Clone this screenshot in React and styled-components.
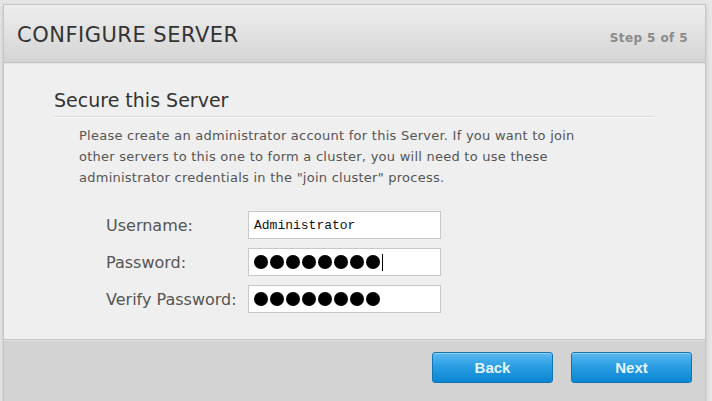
import React from "react";
import styled, { createGlobalStyle } from "styled-components";

const Global = createGlobalStyle`
  html, body { margin: 0; padding: 0; }
  body {
    background: #e6e6e6;
    font-family: "DejaVu Sans", Verdana, sans-serif;
    width: 712px;
    height: 401px;
    overflow: hidden;
  }
`;

const Panel = styled.div`
  margin: 4px 6px 0 3px;
  width: 701px;
  border: 1px solid #c6c6c6;
  box-shadow: 0 2px 4px rgba(0, 0, 0, 0.18);
  background: #efefef;
  display: flex;
  flex-direction: column;
`;

const Header = styled.div`
  height: 57px;
  display: flex;
  align-items: center;
  justify-content: space-between;
  padding: 0 17px 0 13px;
  background: linear-gradient(#eeeeee, #d4d4d4);
  border-bottom: 1px solid #c2c2c2;
  box-shadow: 0 1px 0 #e4e4e4;
`;

const Title = styled.h1`
  margin: 0;
  font-size: 21px;
  letter-spacing: 0.5px;
  font-weight: normal;
  color: #333;
  padding-top: 2px;
`;

const Step = styled.div`
  font-size: 12px;
  letter-spacing: 0.4px;
  font-weight: bold;
  color: #8a8a8a;
  padding-top: 8px;
`;

const Body = styled.div`
  padding: 26px 52px 0 50px;
  height: 250px;
`;

const SectionTitle = styled.h2`
  margin: 0;
  font-size: 19px;
  font-weight: normal;
  color: #333;
  padding: 0 0 5px 0;
  border-bottom: 1px solid #dcdcdc;
  box-shadow: 0 1px 0 #f8f8f8;
`;

const Intro = styled.p`
  margin: 8px 0 0 25px;
  font-size: 13px;
  letter-spacing: 0.25px;
  line-height: 21px;
  color: #555;
  white-space: nowrap;
`;

const Form = styled.div`
  margin: 23px 0 0 52px;
  display: grid;
  grid-template-columns: 142px 193px;
  row-gap: 9px;
  align-items: center;
`;

const Label = styled.label`
  font-size: 16px;
  color: #555;
`;

const Field = styled.div`
  box-sizing: border-box;
  height: 28px;
  background: #fff;
  border: 1px solid #c8c8c8;
  display: flex;
  align-items: center;
  padding-left: 5px;
`;

const TextInput = styled.input`
  border: none;
  outline: none;
  background: transparent;
  width: 100%;
  padding: 0;
  font-family: "Liberation Mono", "DejaVu Sans Mono", monospace;
  font-size: 13px;
  color: #111;
`;

const Dots = styled.div`
  display: flex;
  align-items: center;
  gap: 2px;
`;

const Dot = styled.span`
  width: 14px;
  height: 14px;
  border-radius: 50%;
  background: #000;
`;

const Caret = styled.span`
  width: 1px;
  height: 17px;
  background: #000;
`;

const Footer = styled.div`
  height: 54px;
  border-top: 1px solid #c4c4c4;
  box-shadow: inset 0 1px 0 #e2e2e2;
  background: #d3d3d3;
  display: flex;
  justify-content: flex-end;
  align-items: flex-start;
  gap: 18px;
  padding: 12px 13px 0 0;
`;

const Button = styled.button`
  width: 121px;
  height: 31px;
  border: 1px solid #1273b5;
  border-radius: 3px;
  background: linear-gradient(#5bbaf0 0%, #2a9ee3 45%, #0a86d2 100%);
  color: #e6f5ff;
  font-family: "Liberation Sans", Arial, sans-serif;
  font-weight: bold;
  font-size: 15px;
  cursor: pointer;
  box-shadow: inset 0 1px 0 rgba(255, 255, 255, 0.35);
`;

function PasswordField({ count, caret }) {
  return (
    <Field>
      <Dots>
        {Array.from({ length: count }).map((_, i) => (
          <Dot key={i} />
        ))}
        {caret && <Caret />}
      </Dots>
    </Field>
  );
}

export default function App() {
  return (
    <>
      <Global />
      <Panel>
        <Header>
          <Title>CONFIGURE SERVER</Title>
          <Step>Step 5 of 5</Step>
        </Header>
        <Body>
          <SectionTitle>Secure this Server</SectionTitle>
          <Intro>
            Please create an administrator account for this Server. If you want to join
            <br />
            other servers to this one to form a cluster, you will need to use these
            <br />
            administrator credentials in the "join cluster" process.
          </Intro>
          <Form>
            <Label>Username:</Label>
            <Field>
              <TextInput defaultValue="Administrator" readOnly />
            </Field>
            <Label>Password:</Label>
            <PasswordField count={8} caret />
            <Label>Verify Password:</Label>
            <PasswordField count={8} />
          </Form>
        </Body>
        <Footer>
          <Button>Back</Button>
          <Button>Next</Button>
        </Footer>
      </Panel>
    </>
  );
}
